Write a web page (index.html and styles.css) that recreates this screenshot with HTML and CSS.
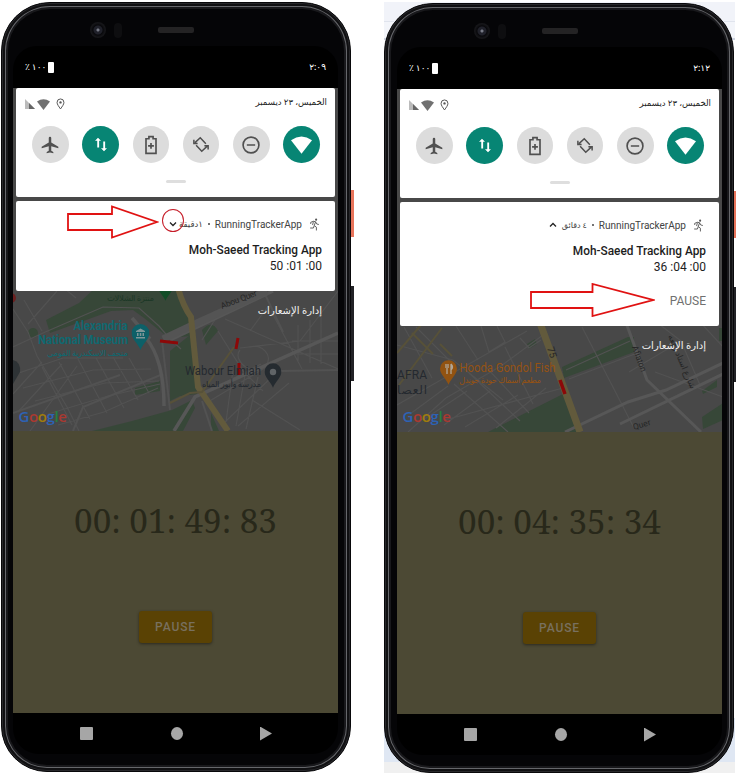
FILE: index.html
```html
<!DOCTYPE html>
<html lang="ar">
<head>
<meta charset="utf-8">
<title>Running Tracker</title>
<link rel="stylesheet" href="styles.css">
</head>
<body>
<svg width="0" height="0" class="defs" aria-hidden="true">
  <defs>
    <symbol id="plane" viewBox="0 0 24 24"><path d="M22 16v-2l-8.500-5V3.500a1.500 1.500 0 0 0-3 0V9L2 14v2l8.500-2.500V19L8 20.500V22l4-1 4 1v-1.500L13.500 19v-5.500z"/></symbol>
    <symbol id="data" viewBox="0 0 24 24"><path d="M8 3 4 7h3v9h2.500V7H12zM17.500 17V8H15v9h-3l4 4 4-4z"/></symbol>
    <symbol id="battery-plus" viewBox="0 0 24 24"><path fill="none" stroke="currentColor" stroke-width="2" d="M6 4.500h3.500V2h5v2.500H18V22H6zM12 9.500v7M8.500 13h7"/></symbol>
    <symbol id="rotate" viewBox="0 0 24 24"><path fill="none" stroke="currentColor" stroke-width="2" d="M18.500 11 11 3 4 9.500M5.500 13l7.500 8L20 14.500M2.500 5.500v5h5M21.500 18.500v-5h-5"/></symbol>
    <symbol id="dnd" viewBox="0 0 24 24"><circle cx="12" cy="12" r="9.500" fill="none" stroke="currentColor" stroke-width="2"/><path d="M7 11h10v2H7z"/></symbol>
    <symbol id="wifi" viewBox="0 0 24 20"><path d="M0 4.500Q12-4 24 4.500L12 20z"/></symbol>
    <symbol id="signal" viewBox="0 0 10 10"><path fill="#bbb" d="M0 0v10h10z"/><path fill="#666" d="M4 4v6h6z"/></symbol>
    <symbol id="place" viewBox="0 0 10 13"><path fill="none" stroke="currentColor" stroke-width="1.100" d="M5 12C3 9 1.200 7 1.200 4.700a3.800 3.800 0 0 1 7.600 0C8.800 7 7 9 5 12z"/><circle cx="5" cy="4.700" r="1.300"/></symbol>
    <symbol id="runner" viewBox="0 0 24 24"><circle cx="15" cy="3" r="2"/><path fill="none" stroke="currentColor" stroke-width="1.700" d="M5 11V8l5-2 4 1-2.500 7 4 3v6M11.500 14 10 18.500H4M14 7l2 4 4 1M10 6.500 8.500 13"/></symbol>
    <symbol id="pin" viewBox="0 0 18 26"><path d="M9 26C7 20 0 15 0 9a9 9 0 0 1 18 0c0 6-7 11-9 17z"/></symbol>
  </defs>
</svg>

<main class="stage">
  <section class="phone">
    <i class="side power"></i><i class="side volume"></i>
    <div class="bezel">
      <div class="sensors"><i class="camera"></i><i class="sensor"></i><i class="speaker"></i></div>
      <div class="screen">
        <header class="status"><span class="charge"><span dir="ltr">٪</span> <span>١٠٠</span><i class="battery"></i></span><span class="clock">٢:٠٩</span></header>
        <div class="layers">
          <div class="app">
            <svg class="map" width="326" height="343" viewBox="13 88 326 343">
              <rect x="13" y="88" width="326" height="343" fill="#484848"/>
              <g fill="#374738">
                <path d="M46 320 79 303 95 288h82l17 30-3 18-22 2-25-20-11-8-22 1-61 22z"/>
                <circle cx="33" cy="333" r="5"/><path d="M170 351 190 335l2 10 5 49-17 2-10 5z"/><path d="M202 330q10-11 16 1l-12 14zM135 388l25-7v10l-25 4zM92 431l40-10 40-11 20-10 3 8-12 23zM211 431v-18l8 18z"/>
              </g>
              <g fill="none" stroke="#525252" stroke-width="1.200">
                <path d="m13 309 15 23 9 24 30 51 12 24M13 347l30-14 60-26 36 1 20 18 11 13 11 10M57 291l-29 33M24 300l18 31M64 288l12 10M13 375l50-17 60 0M23 388l70-18 58-1M35 401l70-18 54-2M48 414l60-18 52-12M58 425l46-13 54-24M42 367l30 58M59 362l31 57M78 359l29 54M96 358l28 50M113 357l25 43M129 358l20 35M13 394l29-32M18 412l44-48M30 431l47-65M202 340l16-25M218 331l25 40 20 20M240 348l60-7 38-50M225 319l113 50M250 331l19-26M271 311l31 58M298 325v37M310 320v43M321 317v47M292 341h46M295 354h43M205 393l56-29M208 402l60-36M225 422l52-50M238 426l51-43M252 400l48 30M233 370l-7 52M245 375l-9 51M258 377l-12 52M240 350c-9 10 15 30 26 15 8-9-5-22-15-18"/>
                <path d="M13 413 120 375M73 431l10-24 80-33M162 340l8 70M202 401l10 30M263 290l20 42M280 371l58-1" stroke-width="2"/>
                <path d="M146 338q18 22 18 68m6-66 103-49M174 431l21-34 143-64M150 339l-18-21" stroke="#575757" stroke-width="3.500"/>
                <path d="m163 339 36-17 68-31" stroke="#545454" stroke-width="7"/>
              </g>
              <g fill="none" stroke="#625a3c"><path d="M178 288q5 18 13 29l7 70 30 44" stroke-width="6"/><path d="m170 403 20-10 12-1 32-45" stroke-width="2" stroke="#575139"/></g>
              <path d="M160 341l18 2M238 338l-2 11M239 363v12" stroke="#8c0808" stroke-width="3"/>
              <use href="#pin" x="158" y="277" width="15" height="26" fill="#124d27"/>
              <circle cx="11" cy="298" r="5" fill="#6b2020"/>
              <path d="M13 360q8 2 7 12l-7 12z" fill="#2e3336"/>
              <g class="map-text">
                <text x="107" y="301" textLength="47" class="tiny park">منتزة الشلالات</text>
                <text x="222" y="309" class="tiny road" textLength="38" transform="rotate(-21 222 309)">Abou Quer</text>
                <g class="teal bold"><text x="73.500" y="329.500" textLength="54" lengthAdjust="spacingAndGlyphs">Alexandria</text><text x="38" y="343.500" textLength="90" lengthAdjust="spacingAndGlyphs">National Museum</text></g>
                <text x="47" y="355.500" textLength="81" class="tiny teal">متحف الاسكندرية القومي</text>
                <text x="185" y="375" textLength="76" lengthAdjust="spacingAndGlyphs" class="slate">Wabour Elmiah</text>
                <text x="202" y="387" textLength="59" class="tiny slate">مدرسة وأبور المياه</text>
              </g>
              <use href="#pin" x="131.500" y="324" width="18" height="26" fill="#0d6068"/>
              <path d="m136 331 4.500-2.500 4.500 2.500v1h-9zM137 333h1.500v3H137zm2.800 0h1.500v3h-1.500zm2.700 0h1.500v3h-1.500zM136 337h9v1.500h-9z" fill="#7d9698"/>
              <use href="#pin" x="264.500" y="363" width="17" height="25" fill="#252b30"/><circle cx="273" cy="372" r="3.200" fill="#606467"/>
              <text x="18.500" y="421.500" class="google"><tspan class="g-blue">G</tspan><tspan class="g-red">o</tspan><tspan class="g-yellow">o</tspan><tspan class="g-blue">g</tspan><tspan class="g-green">l</tspan><tspan class="g-red">e</tspan></text>
            </svg>
            <div class="tracker"><div class="timer">00: 01: 49: 83</div><button class="pause">PAUSE</button></div>
          </div>
          <div class="shade">
            <div class="panel">
              <div class="panel-top"><span class="indicators"><svg class="signal"><use href="#signal"/></svg><svg class="wifi"><use href="#wifi"/></svg><svg class="place"><use href="#place"/></svg></span><span class="date" dir="rtl">الخميس، ٢٣ ديسمبر</span></div>
              <div class="tiles"><span class="tile"><svg><use href="#plane"/></svg></span><span class="tile on"><svg class="small"><use href="#data"/></svg></span><span class="tile"><svg><use href="#battery-plus"/></svg></span><span class="tile"><svg class="small"><use href="#rotate"/></svg></span><span class="tile"><svg><use href="#dnd"/></svg></span><span class="tile on"><svg class="large"><use href="#wifi"/></svg></span></div>
              <i class="handle"></i>
            </div>
            <div class="notice">
              <div class="notice-head"><svg class="chevron near" viewBox="0 0 8 6"><path d="m1 1.500 3 3 3-3"/></svg><span class="age" dir="rtl">١دقيقة</span><b class="dot"></b><span class="name">RunningTrackerApp</span><svg class="runner"><use href="#runner"/></svg></div>
              <div class="title">Moh-Saeed Tracking App</div>
              <div class="elapsed">50 :01 :00</div>
            </div>
            <div class="manage" dir="rtl">إدارة الإشعارات</div>
          </div>
        </div>
        <nav class="nav"><i class="recent"></i><i class="home"></i><i class="back"></i></nav>
      </div>
    </div>
    <svg class="mark mark-left" width="92" height="34" viewBox="0 0 92 34"><path d="M1 9h44V1.500L90 17 45 32.500V25H1z"/></svg>
    <i class="ring"></i>
  </section>

  <section class="phone second">
    <i class="backdrop"></i>
    <i class="side power"></i><i class="side volume"></i>
    <div class="bezel">
      <div class="sensors"><i class="camera"></i><i class="sensor"></i><i class="speaker"></i></div>
      <div class="screen">
        <header class="status"><span class="charge"><span dir="ltr">٪</span> <span>١٠٠</span><i class="battery"></i></span><span class="clock">٢:١٢</span></header>
        <div class="layers">
          <div class="app">
            <svg class="map" width="326" height="343" viewBox="397 89 326 343">
              <rect x="397" y="89" width="326" height="343" fill="#484848"/>
              <g fill="#374738"><path d="m562 367 66-30h6v15l-70 26zM527 344l8-5 2 5-8 5zM488 432l75-38 16 38zM702 391l15-11v7l-14 7zM702 417l21-14v17l-20 9zM719 328h4v13h-4z"/></g>
              <g fill="none" stroke="#525252" stroke-width="1.200">
                <path d="m397 405 130-74M408 432l38-34 55-32 42-31M445 420l118-32M432 378l-28-51M453 364l-37-37M478 360l-22-34M481 326l8 26 16-10-8-16M505 347l28 57M520 338l9 10 12-8M397 345l56 15 50 40M454 384l54 48M469 373l51 48M484 365l45 48M410 414l38-28M423 420l44-29M444 425l46-34M465 427l53-32M496 428l50-40M582 327l52 101M655 321l26 20-52 31M681 341l19 44M700 322l23 25M655 372l68 25M566 370l64-29M569 379l71-27"/>
                <path d="m565 432 63-30 38-12 57-27M625 320l22 60 54 52M620 424l103-50" stroke="#575757" stroke-width="3"/>
              </g>
              <path d="m540 323 21 57 19 52" fill="none" stroke="#625a3c" stroke-width="7"/>
              <path d="m397 353 24-28M399 385l43-57M440 344l12 12M412 333l21 21" fill="none" stroke="#575139" stroke-width="2"/>
              <path d="m560 380 5 14" stroke="#8c0808" stroke-width="3.500"/>
              <g class="map-text">
                <text x="547" y="348" class="mid light" transform="rotate(73 547 348)">75</text>
                <text x="459.500" y="371.500" textLength="96" lengthAdjust="spacingAndGlyphs" class="orange">Hooda Gondol Fish</text>
                <text x="459" y="383" textLength="82" class="tiny orange">مطعم أسماك حودة جوندل</text>
                <text x="397" y="379" textLength="30" class="slate">AFRA</text><text x="397" y="394" textLength="30" class="slate">العصا</text>
                <text x="632" y="347" class="tiny road" transform="rotate(70 632 347)">Afiaton</text>
                <text x="668" y="336" class="tiny road" textLength="58" transform="rotate(67 668 336)">شارع استاد رفعه</text>
                <text x="634" y="430" class="tiny road" transform="rotate(-17 634 430)">Quer</text>
              </g>
              <use href="#pin" x="440" y="360" width="17" height="25" fill="#925311"/><path d="M446 364v4m2-4v4m-1 0v6m4-10v10m0-10q3 3 0 6" fill="none" stroke="#b0a799" stroke-width="1.300"/>
              <text x="402.500" y="421.500" class="google"><tspan class="g-blue">G</tspan><tspan class="g-red">o</tspan><tspan class="g-yellow">o</tspan><tspan class="g-blue">g</tspan><tspan class="g-green">l</tspan><tspan class="g-red">e</tspan></text>
            </svg>
            <div class="tracker"><div class="timer">00: 04: 35: 34</div><button class="pause">PAUSE</button></div>
          </div>
          <div class="shade">
            <div class="panel">
              <div class="panel-top"><span class="indicators"><svg class="signal"><use href="#signal"/></svg><svg class="wifi"><use href="#wifi"/></svg><svg class="place"><use href="#place"/></svg></span><span class="date" dir="rtl">الخميس، ٢٣ ديسمبر</span></div>
              <div class="tiles"><span class="tile"><svg><use href="#plane"/></svg></span><span class="tile on"><svg class="small"><use href="#data"/></svg></span><span class="tile"><svg><use href="#battery-plus"/></svg></span><span class="tile"><svg class="small"><use href="#rotate"/></svg></span><span class="tile"><svg><use href="#dnd"/></svg></span><span class="tile on"><svg class="large"><use href="#wifi"/></svg></span></div>
              <i class="handle"></i>
            </div>
            <div class="notice expanded">
              <div class="notice-head"><svg class="chevron" viewBox="0 0 8 6"><path d="m1 4.500 3-3 3 3"/></svg><span class="age" dir="rtl">٤ دقائق</span><b class="dot"></b><span class="name">RunningTrackerApp</span><svg class="runner"><use href="#runner"/></svg></div>
              <div class="title">Moh-Saeed Tracking App</div>
              <div class="elapsed">36 :04 :00</div>
              <div class="action">PAUSE</div>
            </div>
            <div class="manage" dir="rtl">إدارة الإشعارات</div>
          </div>
        </div>
        <nav class="nav"><i class="recent"></i><i class="home"></i><i class="back"></i></nav>
      </div>
    </div>
    <svg class="mark mark-right" width="125" height="34" viewBox="0 0 125 34"><path d="M1 9h61.500V1L123 17 62.500 33V25H1z"/></svg>
  </section>
</main>
</body>
</html>
```

FILE: styles.css
```css
* { box-sizing: border-box; }
body { margin: 0; width: 739px; height: 773px; overflow: hidden; background: #fff; font-family: Roboto, "Noto Sans", "DejaVu Sans", sans-serif; }
.defs { position: absolute; }
.stage { display: flex; gap: 34px; padding: 2px 0 0 1px; }
i { display: block; }
.phone { position: relative; width: 350px; height: 770px; flex: none; }
.second { margin-top: 1px; left: -1px; margin-right: -1px; }
.second .bezel { padding-left: 12px; padding-right: 11px; }
.backdrop { position: absolute; left: 0; top: -1px; width: 351px; height: 771px; background: linear-gradient(#f1f3f9 0 19px, #e0e4ed 19px 20px, #f3f5fa 20px 36px, #cdd3df 36px 38px, #fff 38px 716px, #dfe7f3 716px 760px, #f0f0f0 760px); }
.bezel { position: relative; height: 100%; border-radius: 49px 49px 46px 46px; border: 1px solid #08080a; background: #050507; padding: 43px 12px 17px 11px; box-shadow: inset 0 0 0 1px #28282b, inset 0 0 0 3px #101012, inset 0 0 0 4px #66676b, inset 0 0 0 6px #18181b; }
.side { position: absolute; right: -3px; width: 6px; background: #222226; }
.power { top: 188px; height: 47px; background: #e8745b; }
.volume { top: 284px; height: 95px; }
.second .power, .second .volume { right: -2px; }
.sensors { position: absolute; left: 88px; top: 19px; display: flex; align-items: center; }
.second .sensors { left: 89px; }
.camera { width: 16px; height: 16px; border-radius: 50%; background: radial-gradient(circle, #777a86 0 1px, #20212a 2px 4px, #08080b 5px, #151518 7px); }
.sensor { width: 8px; height: 15px; margin-left: 8px; border-radius: 4px; background: #0e0e10; }
.speaker { width: 36px; height: 6px; margin-left: 36px; border-radius: 2px; background: #242324; }
.screen { height: 708px; border-radius: 24px 24px 26px 26px; background: #000; overflow: hidden; }
.status { height: 42px; display: flex; justify-content: space-between; align-items: center; padding: 0 12px; color: #fff; font-size: 11px; }
.charge { display: flex; align-items: center; gap: 2px; font-size: 9px; direction: ltr; }
.battery { width: 6px; height: 11px; background: #fff; border-radius: 1px; }
.clock { direction: ltr; font-weight: 500; font-size: 9px; }
.layers { display: grid; grid-template-columns: 100%; height: 625px; }
.layers > * { grid-area: 1 / 1; }
.map { display: block; }
.map-text { font: 12px Roboto, "Noto Sans", "DejaVu Sans", sans-serif; }
.tiny { font-size: 8.500px; }
.mid { font-size: 10px; }
.bold { font-weight: 700; }
.teal { fill: #0f6870; }
.slate { fill: #24292f; }
.park { fill: #1d3827; }
.road, .light { fill: #262626; }
.orange { fill: #955213; }
.google { font: 600 15px "Open Sans", sans-serif; letter-spacing: -0.4px; }
.g-blue { fill: #2d62b5; }
.g-red { fill: #aa3931; }
.g-yellow { fill: #a07d0c; }
.g-green { fill: #27803f; }
.tracker { height: 282px; background: #4c4934; display: flex; flex-direction: column; align-items: center; }
.timer { margin-top: 69px; height: 42px; color: #28281a; font: 33.200px/42px "Noto Serif", "Liberation Serif", serif; white-space: pre; }
.pause { margin-top: 69px; width: 73px; height: 32px; border: 0; border-radius: 3px; background: #5a4204; color: #78705f; font: 500 12px Roboto, sans-serif; letter-spacing: 0.9px; padding: 0; box-shadow: 0 1px 3px #2b2a20; }
.shade { padding: 0 3px; position: relative; }
.panel { height: 109px; background: #fff; border-radius: 2px; display: flex; flex-direction: column; align-items: center; }
.panel-top { width: 100%; height: 29px; margin-bottom: 1px; padding: 3px 8px 0 9px; display: flex; align-items: center; justify-content: space-between; }
.indicators { display: flex; align-items: center; color: #555; fill: currentColor; }
.signal { width: 10px; height: 10px; }
.wifi { width: 13px; height: 11px; margin-left: 2px; fill: #717171; }
.place { width: 9px; height: 12px; margin-left: 6px; }
.date { font-size: 8.600px; color: #222; white-space: nowrap; position: relative; top: -2px; }
.tiles { width: 100%; display: flex; justify-content: space-between; padding: 8px 15px 0 16px; }
.tile { width: 36.500px; height: 37px; border-radius: 50%; background: #dcdcdc; color: #505050; fill: currentColor; display: flex; align-items: center; justify-content: center; }
.tile svg { width: 20px; height: 20px; }
.tile .small { width: 18px; height: 19px; }
.tile .large { width: 21px; height: 18px; }
.tile.on { background: #078574; color: #fff; }
.handle { width: 20px; height: 3px; border-radius: 2px; background: #dedede; margin-top: 17px; }
.notice { height: 90px; margin-top: 4px; border-radius: 2px; background: #fff; padding: 14px 13px 0; color: #1d1d1d; text-align: right; }
.notice.expanded { height: 124px; }
.notice-head { height: 18px; display: flex; align-items: center; justify-content: flex-end; color: #424242; font-size: 10px; }
.chevron { width: 8px; height: 6px; fill: none; stroke: #222; stroke-width: 1.300; margin-right: 5px; }
.chevron.near { margin-right: 2px; }
.age { font-size: 8.500px; white-space: nowrap; }
.expanded .age { font-size: 8px; }
.dot { width: 2px; height: 2px; background: #444; border-radius: 50%; margin: 0 5px; }
.runner { width: 13px; height: 15px; margin-left: 6px; margin-right: 1px; fill: #555; color: #555; }
.title { margin-top: 9px; font-size: 11.850px; line-height: 16px; font-weight: 500; }
.elapsed { font-size: 12px; line-height: 17px; direction: ltr; }
.action { margin-top: 17px; font-size: 12px; line-height: 17px; color: #707070; }
.manage { margin: 11px 13px 0; font-size: 10px; line-height: 18px; color: #f2f2f2; text-align: start; }
.nav { height: 41px; display: flex; justify-content: space-between; align-items: center; padding: 0 66px 0 67px; }
.recent { width: 13px; height: 13px; background: #a6a6a6; border-radius: 1px; }
.home { width: 12px; height: 13px; border-radius: 50%; background: #a6a6a6; }
.back { width: 12px; height: 14px; background: #a6a6a6; clip-path: polygon(0 0, 100% 50%, 0 100%); }
.mark { position: absolute; fill: #fff; stroke: #e01212; stroke-width: 1.800; }
.mark-left { left: 66px; top: 203px; }
.mark-right { left: 146px; top: 280px; }
.ring { position: absolute; left: 161px; top: 207px; width: 22px; height: 23px; border: 1px solid #c61c28; border-radius: 50%; }
```
